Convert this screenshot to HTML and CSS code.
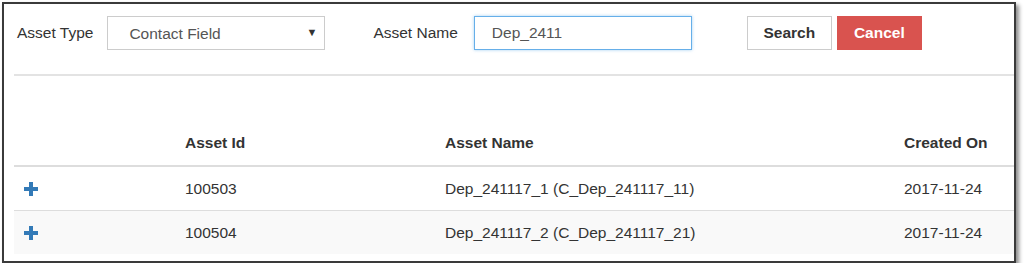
FILE: index.html
```html
<!DOCTYPE html>
<html lang="en">
<head>
    <meta charset="UTF-8">
    <meta name="viewport" content="width=device-width, initial-scale=1.0">
    <title>Asset Search</title>
    <link rel="stylesheet" href="styles.css">
</head>
<body>
    <div class="frame">
        <form class="search-bar" id="asset-search">
            <label class="field-label label-type">Asset Type</label>
            <div class="select-box">
                <span class="select-text">Contact Field</span>
                <span class="select-arrow">&#9660;</span>
            </div>
            <label class="field-label label-name" for="asset-name">Asset Name</label>
            <input type="text" id="asset-name" class="text-input" value="Dep_2411">
            <button type="button" class="btn btn-default">Search</button>
            <button type="button" class="btn btn-danger">Cancel</button>
        </form>

        <div class="separator"></div>

        <table class="asset-table">
            <colgroup>
                <col class="col-toggle">
                <col class="col-id">
                <col class="col-name">
                <col class="col-date">
            </colgroup>
            <thead>
                <tr>
                    <th></th>
                    <th>Asset Id</th>
                    <th>Asset Name</th>
                    <th>Created On</th>
                </tr>
            </thead>
            <tbody>
                <tr>
                    <td class="toggle">
                        <svg class="plus" width="14" height="14" viewBox="0 0 14 14"><path d="M5 0h4v5h5v4H9v5H5V9H0V5h5z"/></svg>
                    </td>
                    <td>100503</td>
                    <td>Dep_241117_1 (C_Dep_241117_11)</td>
                    <td>2017-11-24</td>
                </tr>
                <tr>
                    <td class="toggle">
                        <svg class="plus" width="14" height="14" viewBox="0 0 14 14"><path d="M5 0h4v5h5v4H9v5H5V9H0V5h5z"/></svg>
                    </td>
                    <td>100504</td>
                    <td>Dep_241117_2 (C_Dep_241117_21)</td>
                    <td>2017-11-24</td>
                </tr>
            </tbody>
        </table>
    </div>
</body>
</html>
```

FILE: styles.css
```css
body {
    font-family: "Liberation Sans", Arial, sans-serif;
    font-size: 15.5px;
    color: #333;
    margin: 0;
    padding: 0;
    background-color: #fff;
}

.frame {
    box-sizing: border-box;
    width: 1014px;
    height: 261px;
    margin: 2px 0 0 2px;
    padding: 12px 0 0 10px;
    border: 2px solid #3a3a3a;
    box-shadow: 3px 3px 4px rgba(0, 0, 0, 0.45);
    background-color: #fff;
}

.search-bar {
    display: flex;
    align-items: center;
    height: 34px;
}

.field-label {
    line-height: 34px;
    color: #333;
}

.label-type {
    margin-left: 3px;
}

.select-box {
    box-sizing: border-box;
    display: flex;
    align-items: center;
    justify-content: space-between;
    width: 218px;
    height: 34px;
    margin-left: 14px;
    padding: 2px 7px 0 21px;
    border: 1px solid #ccc;
    color: #555;
}

.select-arrow {
    font-size: 11px;
    color: #333;
    margin-top: -4px;
}

.label-name {
    margin-left: 48px;
}

.text-input {
    box-sizing: border-box;
    width: 218px;
    height: 34px;
    margin-left: 16px;
    padding: 0 17px;
    font-family: inherit;
    font-size: 15.5px;
    color: #555;
    border: 1px solid #66afe9;
    border-radius: 0;
    box-shadow: 0 0 3px rgba(102, 175, 233, 0.6);
    outline: none;
}

.btn {
    box-sizing: border-box;
    width: 85px;
    height: 34px;
    padding: 0;
    font-family: inherit;
    font-size: 15.5px;
    font-weight: bold;
    border-radius: 0;
    cursor: pointer;
}

.btn-default {
    margin-left: 55px;
    background-color: #fff;
    color: #333;
    border: 1px solid #ccc;
}

.btn-danger {
    margin-left: 5px;
    background-color: #d9534f;
    color: #fff;
    border: 1px solid #d9534f;
}

.separator {
    margin-top: 24px;
    border-top: 2px solid #e3e3e3;
}

.asset-table {
    width: 1000px;
    margin-top: 45px;
    table-layout: fixed;
    border-collapse: separate;
    border-spacing: 0;
}

.col-toggle {
    width: 163px;
}

.col-id {
    width: 260px;
}

.col-name {
    width: 459px;
}

.col-date {
    width: 118px;
}

.asset-table th {
    text-align: left;
    font-weight: bold;
    line-height: 21px;
    padding: 11px 8px 12px;
    border-bottom: 2px solid #ddd;
}

.asset-table td {
    line-height: 21px;
    padding: 11px 8px;
    color: #333;
}

.asset-table tbody tr + tr td {
    border-top: 1px solid #ddd;
}

.asset-table tbody tr:nth-child(even) td {
    background-color: #f9f9f9;
}

.asset-table td.toggle {
    padding-left: 10px;
}

.plus {
    display: block;
    fill: #337ab7;
}
```
